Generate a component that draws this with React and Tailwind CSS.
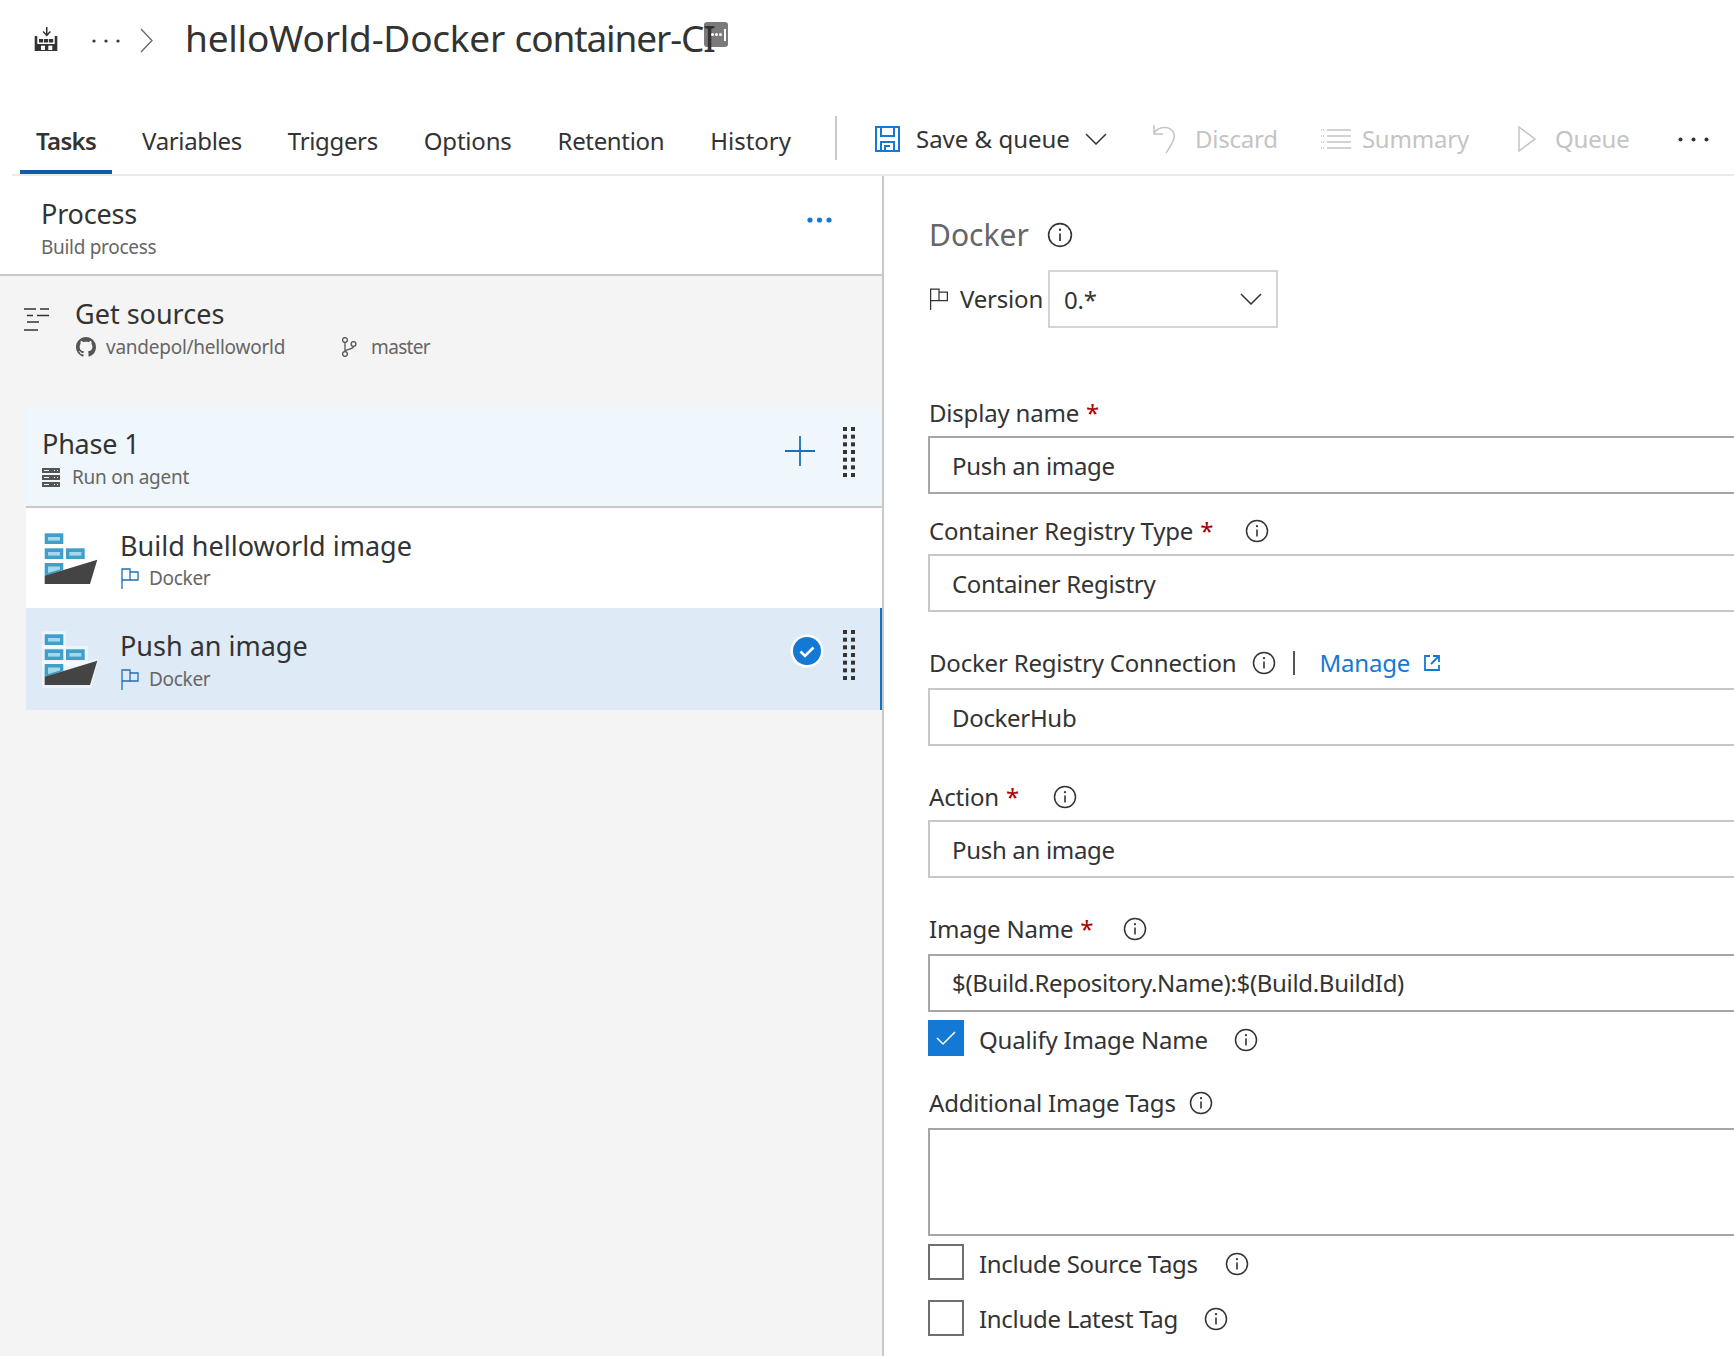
const Info = ({ className = '' }) => (
  <svg width="24" height="24" viewBox="0 0 24 24" fill="none" stroke="#333" className={`shrink-0 ${className}`}>
    <circle cx="12" cy="12" r="10.5" strokeWidth="1.5" />
    <path d="M12 10.5v7" strokeWidth="1.6" />
    <circle cx="12" cy="7.2" r="1.1" fill="#333" stroke="none" />
  </svg>
)

const Flag = ({ color = '#1e6fb4', className = '' }) => (
  <svg width="18" height="21" viewBox="0 0 18 21" fill="none" stroke={color} strokeWidth="1.3" className={`shrink-0 ${className}`}>
    <path d="M1 21V1h8v11H1" />
    <path d="M9 4h8v8H9" />
  </svg>
)

const Chevron = ({ color = '#333', w = 22, h = 12 }) => (
  <svg width={w} height={h} viewBox="0 0 22 12" fill="none" stroke={color} strokeWidth="1.5" className="shrink-0">
    <path d="M1 1l10 10L21 1" />
  </svg>
)

const Grip = ({ className = '' }) => (
  <svg width="12" height="51" viewBox="0 0 12 51" fill="#333" className={`shrink-0 ${className}`}>
    {[0, 1, 2, 3, 4, 5, 6].map((i) => (
      <g key={i}>
        <rect x="0" y={i * 7.67} width="4" height="4" />
        <rect x="8" y={i * 7.67} width="4" height="4" />
      </g>
    ))}
  </svg>
)

const Ship = () => (
  <svg width="56" height="57" viewBox="0 0 56 57" className="shrink-0">
    <rect x="0" y="0" width="24" height="17" fill="#fff" opacity="0.45" />
    <rect x="0" y="15" width="46" height="20" fill="#fff" opacity="0.45" />
    <path d="M0 30h46l10-3v4l-7 26H0z" fill="#fff" opacity="0.45" />
    <rect x="2.7" y="3.3" width="18.6" height="10.7" fill="#3f9fca" />
    <rect x="6" y="7" width="12" height="3.6" fill="#a5d8ea" />
    <rect x="2.7" y="18.3" width="18.6" height="10.7" fill="#3f9fca" />
    <rect x="6" y="22" width="12" height="3.6" fill="#a5d8ea" />
    <rect x="24" y="18.3" width="18.7" height="10.7" fill="#3f9fca" />
    <rect x="27.4" y="22" width="12" height="3.6" fill="#a5d8ea" />
    <path d="M2.7 33h18.6v7L2.7 46z" fill="#3f9fca" />
    <path d="M6 36.5h12v3L6 43z" fill="#a5d8ea" />
    <path d="M2.7 45.7L55.3 29.7 48 54H2.7z" fill="#444" />
  </svg>
)

const Tab = ({ label, active, spacing = 'tracking-[-0.35px]' }) => (
  <div
    className={`flex h-[58px] items-center border-b-4 px-4 pb-1 ${spacing} ${
      active ? 'border-[#0f5ea3] font-semibold' : 'border-transparent'
    }`}
  >
    {label}
  </div>
)

const Label = ({ text, required, info, infoGap = 'ml-[13px]', className = '' }) => (
  <div className={`flex h-10 items-center pl-[1px] text-[#333] ${className}`}>
    <span>{text}</span>
    {required && <span className="ml-[7px] text-[#a80000]">*</span>}
    {info && <Info className={infoGap} />}
  </div>
)

const Input = ({ value, dark, pad = 'pt-[2px]', className = '' }) => (
  <div
    className={`flex h-[58px] w-[900px] items-center border-2 px-[22px] tracking-[-0.32px] text-[#333] ${pad} ${
      dark ? 'border-[#a6a6a6]' : 'border-[#c8c8c8]'
    } ${className}`}
  >
    {value}
  </div>
)

const Check = ({ label, checked, infoGap = 'ml-[26px]', textPad = 'pt-1', spacing = '', className = '' }) => (
  <div className={`flex h-9 items-center text-[#333] ${className}`}>
    <div
      className={`flex h-9 w-9 shrink-0 items-center justify-center ${
        checked ? 'bg-[#1379d4]' : 'border-2 border-[#6f6f6f]'
      }`}
    >
      {checked && (
        <svg width="20" height="16" viewBox="0 0 20 16" fill="none" stroke="#fff" strokeWidth="1.5">
          <path d="M1 8l6 6L19 2" />
        </svg>
      )}
    </div>
    <div className={`ml-[15px] flex items-center ${textPad}`}>
      <span className={spacing}>{label}</span>
      <Info className={infoGap} />
    </div>
  </div>
)

const TaskRow = ({ title, selected }) => (
  <div
    className={`flex items-center pl-4 ${
      selected ? 'h-[102px] border-r-2 border-[#1372c4] bg-[#deeaf6]' : 'h-[100px] bg-white'
    }`}
  >
    <Ship />
    <div className={`ml-[22px] min-w-0 flex-1 tracking-normal ${selected ? 'pt-[1px]' : 'pt-[2px]'}`}>
      <div className="text-[27px] leading-9 text-[#333]">{title}</div>
      <div className="mt-[3px] flex h-6 items-center pl-[1px]">
        <Flag />
        <span className="ml-[10px] text-[19px] tracking-[-0.3px] text-[#666]">Docker</span>
      </div>
    </div>
    {selected && (
      <div className="mr-[25px] flex items-center gap-[19px] pb-[12px]">
        <svg width="34" height="34" viewBox="0 0 34 34" className="-mt-[4px]">
          <circle cx="17" cy="17" r="16.5" fill="#fff" />
          <circle cx="17" cy="17" r="14" fill="#1379d4" />
          <path d="M10.5 17.5l4.5 4.5 8.5-8.5" fill="none" stroke="#fff" strokeWidth="2.6" />
        </svg>
        <Grip className="mt-1" />
      </div>
    )}
  </div>
)

export default function App() {
  return (
    <div className="flex h-screen w-full flex-col overflow-hidden bg-white text-[24px] tracking-[-0.2px] font-['Noto_Sans','Open_Sans',sans-serif] text-[#333]">
      {/* breadcrumb */}
      <div className="flex h-[116px] shrink-0 items-start pl-[34px] pt-[14px]">
        <svg width="24" height="25" viewBox="0 0 24 25" fill="#333" className="mt-[13px] shrink-0">
          <path d="M12 0h1.500v6.500l2.400-2.400 1 1L12.750 9.500 8.600 5.100l1-1L12 6.500z" />
          <path d="M0.700 9h2.600v8h17.400V9h2.600v15H0.700z" />
          <rect x="5" y="12" width="4.200" height="3.500" />
          <rect x="10" y="12" width="4.200" height="3.500" />
          <rect x="15" y="12" width="4.200" height="3.500" />
          <rect x="7" y="18.700" width="4" height="4.300" fill="#fff" />
          <rect x="14.300" y="18.700" width="4" height="4.300" fill="#fff" />
        </svg>
        <svg width="28" height="4" viewBox="0 0 28 4" fill="#333" className="ml-[34px] mt-[25px] shrink-0">
          <circle cx="2" cy="2" r="1.600" />
          <circle cx="14" cy="2" r="1.600" />
          <circle cx="26" cy="2" r="1.600" />
        </svg>
        <svg width="13" height="25" viewBox="0 0 13 25" fill="none" stroke="#666" strokeWidth="1.300" className="ml-[20px] mt-[14px] shrink-0">
          <path d="M1 1l11 11.500L1 24" />
        </svg>
        <div className="relative ml-[32px] whitespace-nowrap text-[37px] leading-[48px] tracking-[-0.22px] text-[#333]">
          helloWorld-Docker <span className="tracking-[-1.1px]">container-CI</span>
          <div className="absolute left-[519px] top-[8px] flex h-[25px] w-6 items-center justify-end gap-[1px] rounded-[3px] bg-[#333]/65 pr-[2px]">
            <span className="h-[3px] w-[3px] rounded-full bg-white" />
            <span className="h-[3px] w-[3px] rounded-full bg-white" />
            <span className="h-[3px] w-[3px] rounded-full bg-white" />
            <span className="ml-[1px] h-3 w-[2px] bg-white" />
          </div>
        </div>
      </div>

      {/* tabs and toolbar */}
      <div className="ml-3 flex h-[60px] shrink-0 items-start border-b-2 border-[#eaeaea]">
        <div className="ml-2 flex gap-[14px]">
          <Tab label="Tasks" active spacing="tracking-[-0.7px]" />
          <Tab label="Variables" />
          <Tab label="Triggers" />
          <Tab label="Options" spacing="tracking-[-0.2px]" />
          <Tab label="Retention" />
          <Tab label="History" spacing="tracking-normal" />
        </div>
        <div className="ml-[28px] h-11 w-[2px] bg-[#c8c8c8]" />
        <div className="flex h-[46px] items-center whitespace-nowrap">
          <svg width="25" height="26" viewBox="0 0 25 26" fill="none" stroke="#1379d4" strokeWidth="2" className="ml-[38px] shrink-0">
            <path d="M1 1h23v24H1z" />
            <path d="M6 1v9h13V1M6 25v-9h13v9M10 25v-5h5" />
          </svg>
          <span className="ml-[16px] tracking-normal">Save &amp; queue</span>
          <div className="ml-[15px]"><Chevron /></div>
          <svg width="24" height="30" viewBox="0 0 24 30" fill="none" stroke="#c4c4c4" strokeWidth="1.500" className="ml-[46px] shrink-0">
            <path d="M1 1v9h9M1 9c5-7 17-8 20 1 2 6-5 14-8 19" />
          </svg>
          <span className="ml-[18px] text-[#c4c4c4]">Discard</span>
          <svg width="30" height="21" viewBox="0 0 30 21" fill="none" stroke="#c4c4c4" strokeWidth="1.500" className="ml-[43px] shrink-0">
            <path d="M6 1h24M6 7h24M6 13h24M6 19h24" />
            <path d="M0 1h3M0 7h3M0 13h3M0 19h3" strokeDasharray="1 1" />
          </svg>
          <span className="ml-[11px] text-[#c4c4c4]">Summary</span>
          <svg width="19" height="26" viewBox="0 0 19 26" fill="none" stroke="#c4c4c4" strokeWidth="1.500" className="ml-[49px] shrink-0">
            <path d="M1 1l16 12L1 25z" />
          </svg>
          <span className="ml-[18px] text-[#c4c4c4]">Queue</span>
          <svg width="31" height="5" viewBox="0 0 31 5" fill="#333" className="ml-[49px] shrink-0">
            <circle cx="2.500" cy="2.500" r="2" />
            <circle cx="15.500" cy="2.500" r="2" />
            <circle cx="28.500" cy="2.500" r="2" />
          </svg>
        </div>
      </div>

      <div className="flex min-h-0 flex-1">
        {/* left panel */}
        <div className="flex w-[884px] shrink-0 flex-col border-r-2 border-[#c8c8c8] bg-[#f4f4f4]">
          <div className="flex h-[100px] shrink-0 items-start justify-between border-b-2 border-[#c8c8c8] bg-white pl-[41px] pr-[50px]">
            <div className="pt-[20px]">
              <div className="text-[27px] leading-9">Process</div>
              <div className="mt-[3px] text-[19px] leading-6 tracking-[-0.3px] text-[#666]">Build process</div>
            </div>
            <svg width="25" height="6" viewBox="0 0 25 6" fill="#1379d4" className="mt-[41px]">
              <circle cx="3" cy="3" r="2.600" />
              <circle cx="12.500" cy="3" r="2.600" />
              <circle cx="22" cy="3" r="2.600" />
            </svg>
          </div>

          <div className="flex h-[130px] shrink-0 pl-[23px] pt-[20px]">
            <svg width="27" height="23" viewBox="0 0 27 23" fill="none" stroke="#333" strokeWidth="1.500" className="mt-[12px] shrink-0">
              <path d="M1 1h12M17 1h9M4 7.500h6M14 7.500h12M4 14h12M1 22h14" />
            </svg>
            <div className="ml-[25px]">
              <div className="text-[27px] leading-9 tracking-normal">Get sources</div>
              <div className="mt-[3px] flex h-6 items-center pl-[1px] text-[19px] tracking-[-0.25px] text-[#666]">
                <svg width="20" height="20" viewBox="0 0 16 16" fill="#555" className="shrink-0">
                  <path d="M8 0C3.580 0 0 3.580 0 8c0 3.540 2.290 6.530 5.470 7.590.4.070.55-.17.55-.38 0-.19-.01-.82-.01-1.490-2.010.37-2.530-.49-2.690-.94-.09-.23-.48-.94-.82-1.130-.28-.15-.68-.52-.01-.53.630-.01 1.080.58 1.230.82.720 1.210 1.870.87 2.330.66.070-.52.280-.87.510-1.070-1.780-.2-3.640-.89-3.640-3.950 0-.87.310-1.590.820-2.150-.08-.2-.36-1.020.08-2.120 0 0 .670-.21 2.200.82.640-.18 1.320-.27 2-.27s1.360.09 2 .27c1.530-1.040 2.200-.82 2.200-.82.440 1.100.160 1.920.080 2.120.510.560.820 1.270.820 2.150 0 3.070-1.870 3.750-3.650 3.950.290.250.540.730.540 1.480 0 1.070-.01 1.930-.01 2.200 0 .21.150.460.550.380A8.013 8.013 0 0016 8c0-4.420-3.580-8-8-8z" />
                </svg>
                <span className="ml-[10px]">vandepol/helloworld</span>
                <svg width="16" height="20" viewBox="0 0 16 20" fill="none" stroke="#555" strokeWidth="1.300" className="ml-[56px] shrink-0">
                  <circle cx="4" cy="3" r="2.400" />
                  <circle cx="4" cy="17" r="2.400" />
                  <circle cx="12.500" cy="7" r="2.400" />
                  <path d="M4 5.500v9M12.500 9.500c0 3-8.500 2.500-8.500 5" />
                </svg>
                <span className="ml-[14px] tracking-[-0.7px]">master</span>
              </div>
            </div>
          </div>

          <div className="ml-[26px] flex shrink-0 flex-col">
            <div className="flex h-[102px] items-center justify-between border-b-2 border-[#c8c8c8] bg-[#eff6fc] pl-4 pr-[27px]">
              <div className="pt-[3px]">
                <div className="text-[27px] leading-9">Phase 1</div>
                <div className="mt-1 flex h-6 items-center">
                  <svg width="18" height="20" viewBox="0 0 18 20" fill="#555" className="shrink-0">
                    <path d="M0 0h18v5H0zM0 7h18v5H0zM0 14h18v5H0z" />
                    <path d="M2 2h5v1H2zM2 9h5v1H2zM2 16h5v1H2zM12 2h1v1h-1zM15 2h1v1h-1zM12 9h1v1h-1zM15 9h1v1h-1zM12 16h1v1h-1zM15 16h1v1h-1z" fill="#eff6fc" />
                  </svg>
                  <span className="ml-3 text-[19px] tracking-[-0.25px] text-[#666]">Run on agent</span>
                </div>
              </div>
              <div className="flex items-center gap-[28px] pb-[10px]">
                <svg width="30" height="30" viewBox="0 0 30 30" stroke="#1e6fb4" strokeWidth="1.800" fill="none">
                  <path d="M15 0v30M0 15h30" />
                </svg>
                <Grip className="mt-[3px]" />
              </div>
            </div>
            <TaskRow title="Build helloworld image" />
            <TaskRow title="Push an image" selected />
          </div>
        </div>

        {/* right panel */}
        <div className="min-w-0 flex-1 overflow-hidden pl-[44px]">
          <div className="mt-[36px] flex h-11 items-center pl-[1px]">
            <span className="text-[30px] tracking-normal text-[#666]">Docker</span>
            <Info className="ml-[18px] mt-[2px] h-[26px] w-[26px]" />
          </div>
          <div className="mt-[14px] flex h-[58px] items-center pl-[1px]">
            <svg width="20" height="22" viewBox="0 0 18 21" fill="none" stroke="#333" strokeWidth="1.200" className="shrink-0">
              <path d="M1 21V1h8v11H1" />
              <path d="M9 4h8v8H9" />
            </svg>
            <span className="ml-[11px]">Version</span>
            <div className="ml-[5px] flex h-[58px] w-[230px] items-center justify-between border-2 border-[#d4d4d4] pl-[14px] pr-[14px]">
              <span className="pt-[2px]">0.*</span>
              <Chevron />
            </div>
          </div>

          <Label text="Display name" required className="mt-[65px]" />
          <Input value="Push an image" dark className="mt-[3px]" />

          <Label text="Container Registry Type" required info infoGap="ml-[32px]" className="mt-[17px]" />
          <Input value="Container Registry" className="mt-[3px]" />

          <div className="mt-[31px] flex h-10 items-center pl-[1px]">
            <span>Docker Registry Connection</span>
            <Info className="ml-4" />
            <span className="ml-[17px] h-6 w-[2px] bg-[#555]" />
            <span className="ml-6 text-[#1379d4]">Manage</span>
            <svg width="16" height="16" viewBox="0 0 16 16" fill="none" stroke="#1379d4" strokeWidth="1.800" className="ml-[14px]">
              <path d="M6 1H1v14h14v-5M9 1h6v6M15 1L7 9" />
            </svg>
          </div>
          <Input value="DockerHub" className="mt-[5px]" />

          <Label text="Action" required info infoGap="ml-[34px]" className="mt-[31px]" />
          <Input value="Push an image" className="mt-[3px]" />

          <Label text="Image Name" required info infoGap="ml-[30px]" className="mt-[31px]" />
          <Input value="$(Build.Repository.Name):$(Build.BuildId)" dark pad="pt-0" className="mt-[5px]" />

          <Check label="Qualify Image Name" checked className="mt-2" />

          <Label text="Additional Image Tags" info className="mt-[27px]" />
          <div className="mt-[5px] h-[108px] w-[900px] border-2 border-[#a6a6a6]" />

          <Check label="Include Source Tags" infoGap="ml-[27px]" spacing="tracking-[-0.3px]" className="mt-2" />
          <Check label="Include Latest Tag" infoGap="ml-[26px]" textPad="pt-[1px]" spacing="tracking-[-0.3px]" className="mt-5" />
        </div>
      </div>
    </div>
  )
}
